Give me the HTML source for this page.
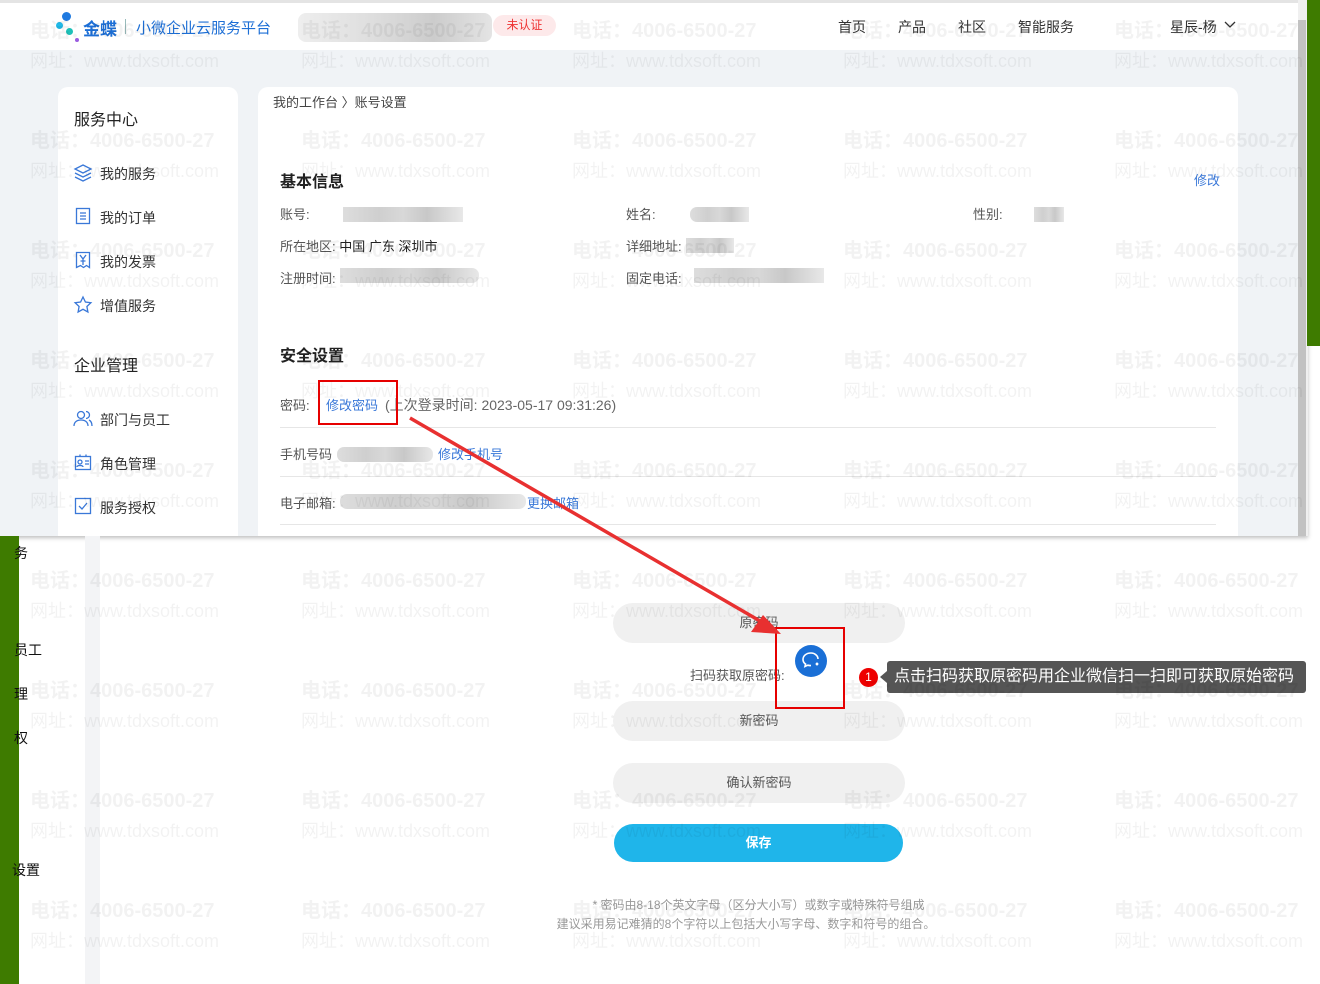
<!DOCTYPE html>
<html><head><meta charset="utf-8"><style>
*{margin:0;padding:0;box-sizing:border-box}
body{width:1320px;height:984px;overflow:hidden;position:relative;background:#fff;font-family:"Liberation Sans","Noto Sans CJK SC",sans-serif;color:#333}
.a{position:absolute;white-space:nowrap}
.wm{position:absolute;color:rgba(0,0,0,0.05);font-weight:bold;font-size:20px;line-height:30px;white-space:nowrap;pointer-events:none;z-index:50}
.blur{position:absolute;height:15px;background:linear-gradient(90deg,#ddd,#cfcfcf 30%,#d8d8d8 50%,#c8c8c8 70%,#e8e8e8);}
.f14{font-size:14px}
.pill{position:absolute;left:613px;width:292px;height:40px;border-radius:20px;background:#f0f0f0;text-align:center;line-height:40px;font-size:13px;color:#555}
</style></head><body>

<div class="a" style="left:0;top:0;width:1308px;height:536px;background:#f0f3f6;box-shadow:0 2px 4px rgba(0,0,0,.25)"></div>
<div class="a" style="left:0;top:0;width:1298px;height:3px;background:#e4e4e4"></div>
<div class="a" style="left:0;top:3px;width:1298px;height:47px;background:#fff"></div>
<div class="a" style="left:62px;top:12px;width:9px;height:9px;border-radius:50%;background:#1f7ae0"></div>
<div class="a" style="left:56px;top:22px;width:7px;height:7px;border-radius:50%;background:#20b9e8"></div>
<div class="a" style="left:66px;top:28px;width:7px;height:7px;border-radius:50%;background:#1ec0b8"></div>
<div class="a" style="left:75px;top:38px;width:4px;height:4px;border-radius:50%;background:#9a5ce0"></div>
<div class="a" style="left:83px;top:15px;font-size:17px;font-weight:bold;color:#1d6fd6">金蝶</div>
<div class="a" style="left:125px;top:19px;width:1px;height:15px;background:#9bb"></div>
<div class="a" style="left:136px;top:17px;font-size:15px;color:#1d6fd6">小微企业云服务平台</div>
<div class="a" style="left:298px;top:13px;width:194px;height:29px;border-radius:8px;background:linear-gradient(90deg,#eee,#ddd 40%,#ccc 70%,#e4e4e4)"></div>
<div class="a" style="left:493px;top:15px;width:63px;height:21px;border-radius:11px;background:#fde9ea;color:#e33;font-size:12px;text-align:center;line-height:21px">未认证</div>
<div class="a f14" style="left:838px;top:17px;color:#333">首页</div>
<div class="a f14" style="left:898px;top:17px;color:#333">产品</div>
<div class="a f14" style="left:958px;top:17px;color:#333">社区</div>
<div class="a f14" style="left:1018px;top:17px;color:#333">智能服务</div>
<div class="a f14" style="left:1170px;top:17px;color:#333">星辰-杨</div>
<svg class="a" style="left:1224px;top:20px" width="12" height="10"><path d="M1 2l5 5 5-5" stroke="#333" fill="none" stroke-width="1.3"/></svg>
<div class="a" style="left:1298px;top:0;width:10px;height:536px;background:#f0f0f0"></div>
<div class="a" style="left:1298px;top:20px;width:8px;height:516px;background:#c2c2c2"></div>
<div class="a" style="left:1307px;top:0;width:13px;height:346px;background:#3e7b00"></div>

<div class="a" style="left:58px;top:87px;width:180px;height:449px;background:#fff;border-radius:10px 10px 0 0"></div>
<div class="a" style="left:74px;top:106px;font-size:16px;color:#222">服务中心</div>
<svg class="a" style="left:73px;top:163px" width="20" height="20" fill="none" stroke="#3a78d8" stroke-width="1.3"><path d="M10 2l8 4-8 4-8-4z M2 10l8 4 8-4 M2 14l8 4 8-4"/></svg>
<div class="a f14" style="left:100px;top:164px">我的服务</div>
<svg class="a" style="left:75px;top:207px" width="16" height="18" fill="none" stroke="#3a78d8" stroke-width="1.3"><rect x="1.5" y="1.5" width="13" height="15"/><path d="M5 6h6M5 9h6M5 12h6"/></svg>
<div class="a f14" style="left:100px;top:208px">我的订单</div>
<svg class="a" style="left:75px;top:251px" width="16" height="18" fill="none" stroke="#3a78d8" stroke-width="1.3"><path d="M1.5 1.5h13v15l-3-2-3 2-3-2-4 2z M5 4l3 4 3-4M8 8v6M5.5 10h5"/></svg>
<div class="a f14" style="left:100px;top:252px">我的发票</div>
<svg class="a" style="left:73px;top:295px" width="20" height="20" fill="none" stroke="#3a78d8" stroke-width="1.3"><path d="M10 2l2.4 5 5.5.7-4 3.8 1 5.5L10 14.3 5.1 17l1-5.5-4-3.8 5.5-.7z"/></svg>
<div class="a f14" style="left:100px;top:296px">增值服务</div>
<div class="a" style="left:74px;top:352px;font-size:16px;color:#222">企业管理</div>
<svg class="a" style="left:73px;top:409px" width="20" height="18" fill="none" stroke="#3a78d8" stroke-width="1.3"><circle cx="8" cy="6" r="3.5"/><path d="M1 17c0-4 3-6 7-6s7 2 7 6M13 2.5a3.5 3.5 0 010 7M16 11c2 1 3 3 3 6"/></svg>
<div class="a f14" style="left:100px;top:410px">部门与员工</div>
<svg class="a" style="left:74px;top:453px" width="18" height="18" fill="none" stroke="#3a78d8" stroke-width="1.3"><rect x="1.5" y="3.5" width="15" height="13"/><circle cx="6" cy="9" r="2"/><path d="M3 14c0-2 6-2 6 0M11 8h4M11 11h4M6 1.5v2M12 1.5v2"/></svg>
<div class="a f14" style="left:100px;top:454px">角色管理</div>
<svg class="a" style="left:74px;top:497px" width="18" height="18" fill="none" stroke="#3a78d8" stroke-width="1.3"><rect x="1.5" y="1.5" width="15" height="15"/><path d="M5 9l3 3 5-6"/></svg>
<div class="a f14" style="left:100px;top:498px">服务授权</div>

<div class="a" style="left:258px;top:87px;width:980px;height:449px;background:#fff;border-radius:10px 10px 0 0"></div>
<div class="a" style="left:273px;top:92px;font-size:13px;color:#444">我的工作台 〉账号设置</div>
<div class="a" style="left:280px;top:168px;font-size:16px;font-weight:bold;color:#222">基本信息</div>
<div class="a" style="left:1194px;top:170px;font-size:13px;color:#3a78d8">修改</div>
<div class="a" style="left:280px;top:204px;font-size:13px;color:#555">账号:</div>
<div class="blur" style="left:343px;top:207px;width:120px"></div>
<div class="a" style="left:626px;top:204px;font-size:13px;color:#555">姓名:</div>
<div class="blur" style="left:690px;top:207px;width:59px;border-radius:7px 0 0 7px"></div>
<div class="a" style="left:973px;top:204px;font-size:13px;color:#555">性别:</div>
<div class="blur" style="left:1034px;top:207px;width:30px"></div>
<div class="a" style="left:280px;top:236px;font-size:13px;color:#555">所在地区: <span style="color:#222">中国 广东 深圳市</span></div>
<div class="a" style="left:626px;top:236px;font-size:13px;color:#555">详细地址:</div>
<div class="blur" style="left:686px;top:238px;width:48px"></div>
<div class="a" style="left:280px;top:268px;font-size:13px;color:#555">注册时间:</div>
<div class="blur" style="left:340px;top:268px;width:139px;border-radius:0 7px 7px 0"></div>
<div class="a" style="left:626px;top:268px;font-size:13px;color:#555">固定电话:</div>
<div class="blur" style="left:694px;top:268px;width:130px"></div>

<div class="a" style="left:280px;top:342px;font-size:16px;font-weight:bold;color:#222">安全设置</div>
<div class="a" style="left:280px;top:395px;font-size:13px;color:#555">密码:</div>
<div class="a" style="left:326px;top:395px;font-size:13px;color:#3a78d8">修改密码</div>
<div class="a" style="left:385px;top:395px;font-size:14px;color:#666">(上次登录时间: 2023-05-17 09:31:26)</div>
<div class="a" style="left:318px;top:380px;width:80px;height:45px;border:2px solid #e60000"></div>
<div class="a" style="left:280px;top:427px;width:936px;height:1px;background:#e6e6e6"></div>
<div class="a" style="left:280px;top:444px;font-size:13px;color:#555">手机号码</div>
<div class="blur" style="left:337px;top:447px;width:96px;border-radius:7px"></div>
<div class="a" style="left:438px;top:444px;font-size:13px;color:#3a78d8">修改手机号</div>
<div class="a" style="left:280px;top:476px;width:936px;height:1px;background:#e6e6e6"></div>
<div class="a" style="left:280px;top:493px;font-size:13px;color:#555">电子邮箱:</div>
<div class="blur" style="left:340px;top:494px;width:186px;border-radius:7px"></div>
<div class="a" style="left:527px;top:493px;font-size:13px;color:#3a78d8">更换邮箱</div>
<div class="a" style="left:280px;top:524px;width:936px;height:1px;background:#e6e6e6"></div>

<div class="a" style="left:0;top:536px;width:19px;height:448px;background:#3e7b00"></div>
<div class="a" style="left:14px;top:544px;font-size:14px;color:#111;line-height:18px">务</div>
<div class="a" style="left:14px;top:640px;font-size:14px;color:#111">员工</div>
<div class="a" style="left:14px;top:684px;font-size:14px;color:#111">理</div>
<div class="a" style="left:14px;top:728px;font-size:14px;color:#111">权</div>
<div class="a" style="left:12px;top:860px;font-size:14px;color:#111">设置</div>
<div class="a" style="left:85px;top:536px;width:15px;height:448px;background:#f3f4f6"></div>

<div class="pill" style="top:603px">原密码</div>
<div class="a" style="left:690px;top:665px;font-size:13px;color:#555">扫码获取原密码:</div>
<div class="a" style="left:795px;top:645px;width:32px;height:32px;border-radius:50%;background:#1a6fd6"></div>
<svg class="a" style="left:795px;top:645px" width="32" height="32" fill="none" stroke="#fff" stroke-width="1.6"><path d="M16 8c-5 0-8 3-8 6.5 0 2 1 3.6 2.6 4.6l-.6 2.4 2.8-1.3c1 .3 2 .4 3.2.4"/><path d="M23 14c0-3-3-6-7-6"/><path d="M21 18l2 2M23 18l-2 2"/></svg>
<div class="pill" style="top:701px">新密码</div>
<div class="a" style="left:775px;top:627px;width:70px;height:82px;border:2px solid #e60000;z-index:5"></div>
<div class="pill" style="top:763px">确认新密码</div>
<div class="a" style="left:614px;top:824px;width:289px;height:38px;border-radius:19px;background:#1fb5ea;color:#fff;text-align:center;line-height:38px;font-size:13px;font-weight:bold">保存</div>
<div class="a" style="left:0;top:896px;width:1517px;text-align:center;font-size:12px;color:#999">* 密码由8-18个英文字母（区分大小写）或数字或特殊符号组成</div>
<div class="a" style="left:0;top:915px;width:1492px;text-align:center;font-size:12px;color:#999">建议采用易记难猜的8个字符以上包括大小写字母、数字和符号的组合。</div>

<div class="a" style="left:859px;top:668px;width:19px;height:19px;border-radius:50%;background:#e00;color:#fff;font-size:12px;text-align:center;line-height:19px">1</div>
<div class="a" style="left:880px;top:671px;width:0;height:0;border-top:6px solid transparent;border-bottom:6px solid transparent;border-right:7px solid #555"></div>
<div class="a" style="left:887px;top:661px;width:419px;height:32px;background:#555;border-radius:3px;color:#fff;font-size:16px;line-height:32px;padding-left:7px">点击扫码获取原密码用企业微信扫一扫即可获取原始密码</div>

<svg class="a" style="left:0;top:0;z-index:60" width="1320" height="984"><line x1="410" y1="418" x2="772" y2="628" stroke="#e83030" stroke-width="3.5"/><path d="M781 634l-30-2 12-17z" fill="#e83030"/></svg>

<div id="wm"></div>
<script>
var h='';var xs=[30,301,572,843,1114],ys=[16,126,236,346,456,566,676,786,896];
ys.forEach(function(y){xs.forEach(function(x){h+='<div class="wm" style="left:'+x+'px;top:'+y+'px">电话：4006-6500-27<br><span style="font-weight:normal;font-size:18px">网址：www.tdxsoft.com</span></div>';});});
document.getElementById('wm').innerHTML=h;
</script>
</body></html>
